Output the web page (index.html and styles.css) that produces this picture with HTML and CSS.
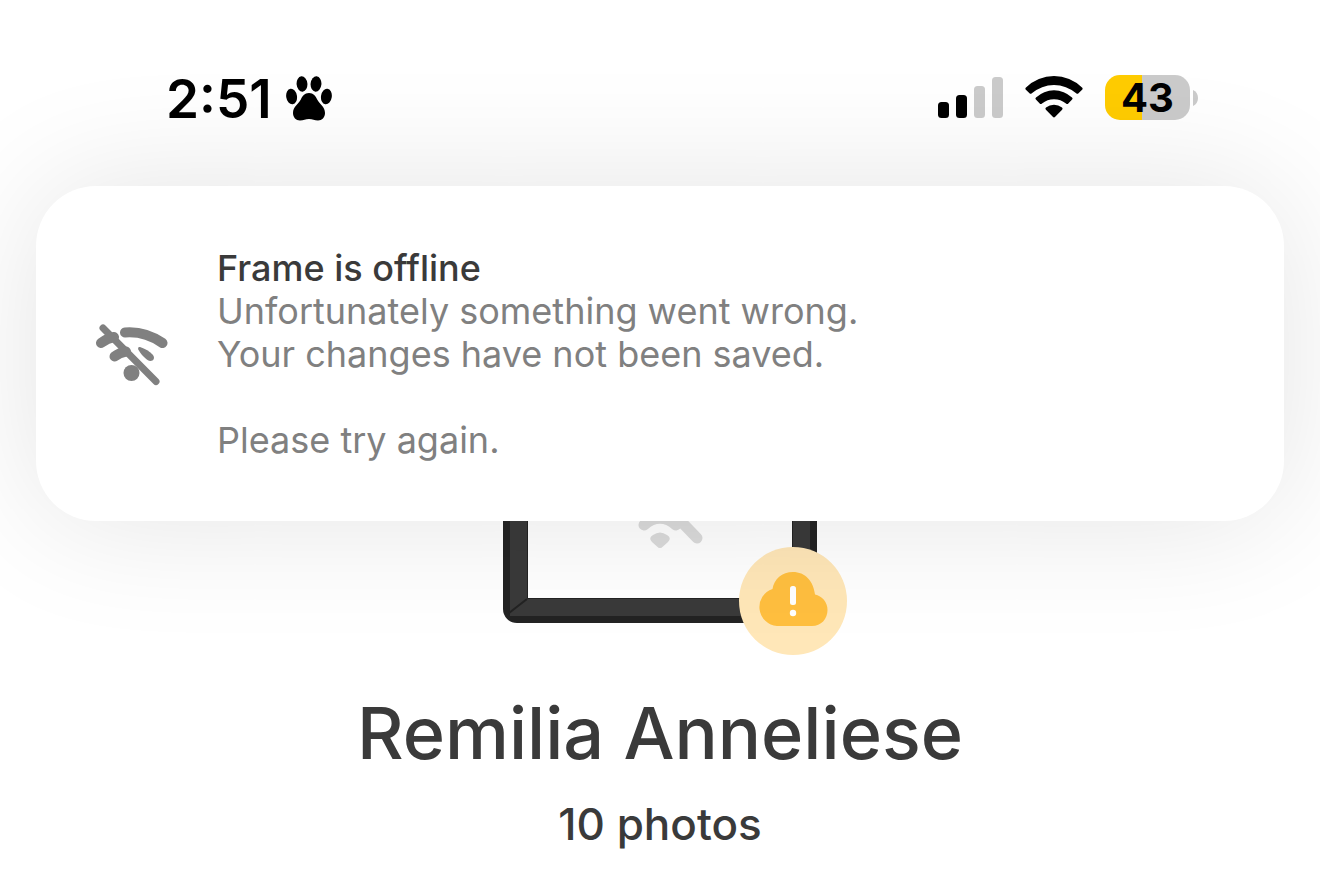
FILE: index.html
```
<!DOCTYPE html>
<html lang="en">
<head>
  <meta charset="UTF-8">
  <title>Remilia Anneliese</title>
  <meta name="viewport" content="width=device-width, initial-scale=1">
  <link rel="stylesheet" href="styles.css">
</head>
<body>

  <header class="status-bar">
    <div class="status-group status-left">
      <time class="clock">2:51</time>
      <svg class="paw" viewBox="0 0 46 46" aria-hidden="true">
        <ellipse cx="16" cy="8" rx="5.400" ry="7.700" transform="rotate(-5 16 8)"/>
        <ellipse cx="30" cy="8" rx="5.400" ry="7.700" transform="rotate(5 30 8)"/>
        <ellipse cx="5.600" cy="20.500" rx="5.400" ry="7.800" transform="rotate(-8 5.600 20.500)"/>
        <ellipse cx="40.400" cy="20.500" rx="5.400" ry="7.800" transform="rotate(8 40.400 20.500)"/>
        <path d="M23 17C27.500 17 29.600 20 31.200 23.500C33.200 28 39 30.500 39 37C39 41.500 36 44.500 32 44.500C28.500 44.500 26.500 43 23 43S17.500 44.500 14 44.500C10 44.500 7 41.500 7 37C7 30.500 12.800 28 14.800 23.500C16.400 20 18.500 17 23 17Z"/>
      </svg>
    </div>
    <div class="status-group status-right">
      <svg class="signal" viewBox="0 0 65 42" aria-hidden="true">
        <rect x="0" y="25" width="11" height="16" rx="3.500"/>
        <rect x="18" y="18" width="11" height="23" rx="3.500"/>
        <rect class="dim" x="36" y="9" width="11" height="32" rx="3.500"/>
        <rect class="dim" x="54" y="0" width="11" height="41" rx="3.500"/>
      </svg>
      <svg class="wifi" viewBox="0 0 58 43" aria-hidden="true">
        <path d="M1 11.500A40 40 0 0 1 57 11.500Q58.200 12.600 57.100 13.700L53.500 17.300Q52.400 18.300 51.200 17.300A34 34 0 0 0 6.800 17.300Q5.600 18.300 4.500 17.300L0.900 13.700Q-0.200 12.600 1 11.500Z"/>
        <path d="M11 21.400A26.500 26.500 0 0 1 47 21.400Q48.200 22.500 47.100 23.600L43.300 27.400Q42.200 28.400 41 27.400A19 19 0 0 0 17 27.400Q15.800 28.400 14.700 27.400L10.900 23.600Q9.800 22.500 11 21.400Z"/>
        <path d="M21 31.500A13 13 0 0 1 37 31.500Q38.200 32.600 37.100 33.700L30.200 40.800Q29 42 27.800 40.800L20.900 33.700Q19.800 32.600 21 31.500Z"/>
      </svg>
      <div class="battery">
        <span class="battery-level">43</span>
        <svg class="battery-cap" viewBox="0 0 5 16" aria-hidden="true">
          <path d="M0 0C3 1.500 5 4 5 8S3 14.500 0 16Z"/>
        </svg>
      </div>
    </div>
  </header>

  <section class="banner" role="alert">
    <svg class="banner-icon" viewBox="0 0 72 62" aria-hidden="true">
      <path class="thick" d="M29 8.500C41 7.500 54 10.500 66.500 19"/>
      <path class="thick" d="M5 19C9 16 12 14 18 13"/>
      <path class="thick" d="M18.500 32.500C21 30.500 24 28.500 30 27.500"/>
      <path d="M44 23C49 24.500 54 27.500 57 31C60 35.500 55.500 38.500 51.500 36C48 33.500 44 29 42.300 25.500Q41.500 22.500 44 23Z"/>
      <circle cx="35.500" cy="49" r="8"/>
      <path class="slash" d="M7 4L60 57.500"/>
    </svg>
    <div class="banner-text">
      <h2>Frame is offline</h2>
      <p>Unfortunately something went wrong.<br>Your changes have not been saved.</p>
      <p>Please try again.</p>
    </div>
  </section>

  <main class="device">
    <div class="frame">
      <svg class="frame-art" viewBox="0 0 314 314" aria-hidden="true">
        <path fill="#232323" fill-rule="evenodd" d="M14 0H300A14 14 0 0 1 314 14V300A14 14 0 0 1 300 314H14A14 14 0 0 1 0 300V14A14 14 0 0 1 14 0ZM25 25V289H289V25Z"/>
        <path fill="#3a3a3a" fill-rule="evenodd" d="M7 7H307V307H7ZM25 25V289H289V25Z"/>
        <path class="edge" d="M24.500 24.500H289.500V289.500H24.500Z"/>
        <path class="edge miter" d="M6 304L24 290M308 304L290 290M6 6L24 24M308 6L290 24"/>
        <g class="offline">
          <path d="M141 216Q157 202 173 216"/>
          <path d="M142 175L194 229"/>
        </g>
        <path fill="#dbdbdb" d="M150 226Q157 221 164 226Q169 229 165 233L160 237.500Q157 240.500 154 237.500L149 233Q145 229 150 226Z"/>
      </svg>
      <svg class="badge" viewBox="0 0 108 108" role="img" aria-label="Sync problem">
        <circle cx="54" cy="54" r="54" fill="#ffe7b8"/>
        <path fill="#ffbf3f" d="M38 79A19 19 0 0 1 33.500 42C35 32 43 25 54 25C66 25 74.500 34 76 47.500C83 49 88.500 55 88.500 63C88.500 72 82 79 73 79Z"/>
        <rect x="51" y="39" width="6" height="19" rx="2.500" fill="#fff"/>
        <circle cx="54" cy="66" r="3.200" fill="#fff"/>
      </svg>
    </div>
    <h1>Remilia Anneliese</h1>
    <p class="count">10 photos</p>
  </main>

</body>
</html>
```

FILE: styles.css
```
* {
  box-sizing: border-box;
}
body {
  margin: 0;
  position: relative;
  overflow-x: hidden;
  background: #fff;
  color: #3a3a3a;
  font-family: Inter, "Liberation Sans", sans-serif;
}
h1, h2, p {
  margin: 0;
}
.status-bar {
  display: flex;
  align-items: center;
  justify-content: space-between;
  padding: 64px 122px 0 166px;
  color: #000;
}
.status-group {
  display: flex;
  align-items: center;
}
.status-left {
  gap: 14px;
  padding-top: 3px;
}
.status-right {
  gap: 22px;
}
.clock {
  font-size: 53px;
  font-weight: 600;
  line-height: 64px;
}
.paw {
  width: 46px;
  height: 46px;
}
.signal {
  width: 65px;
  height: 42px;
}
.signal .dim {
  fill: #cbcbcb;
}
.wifi {
  width: 58px;
  height: 43px;
}
.battery {
  display: flex;
  align-items: center;
  gap: 3px;
}
.battery-level {
  width: 85px;
  border-radius: 15px;
  background: linear-gradient(to right, #fc0 43%, #cbcbcb 43%);
  font-size: 40px;
  font-weight: 700;
  line-height: 45px;
  text-align: center;
}
.battery-cap {
  width: 5px;
  height: 16px;
  fill: #cbcbcb;
}
/* notification sits over the page */
.banner {
  position: absolute;
  z-index: 1;
  top: 186px;
  left: 36px;
  right: 36px;
  display: flex;
  align-items: center;
  gap: 49px;
  padding: 61px 60px 59px;
  border-radius: 60px;
  background: #fff;
  box-shadow: 0 0 130px rgba(0, 0, 0, 0.11);
}
.banner-icon {
  flex: none;
  width: 72px;
  height: 62px;
  fill: #808080;
}
.banner-icon .thick,
.banner-icon .slash {
  fill: none;
  stroke: #808080;
  stroke-width: 10;
  stroke-linecap: round;
}
.banner-icon .slash {
  stroke-width: 7;
}
.banner-text {
  color: #808080;
  font-size: 36px;
  line-height: 43px;
}
.banner-text h2 {
  color: #3a3a3a;
  font-size: 36px;
  font-weight: 500;
}
.banner-text p + p {
  margin-top: 43px;
}
.device {
  display: flex;
  flex-direction: column;
  align-items: center;
  padding-top: 178px;
}
.frame {
  position: relative;
  width: 314px;
}
.frame-art {
  display: block;
  width: 100%;
}
.frame-art .edge {
  fill: none;
  stroke: #232323;
  stroke-width: 1;
}
.frame-art .miter {
  stroke-width: 2;
}
.frame-art .offline {
  fill: none;
  stroke: #dbdbdb;
  stroke-width: 11;
  stroke-linecap: round;
}
.badge {
  position: absolute;
  right: -30px;
  bottom: -32px;
  width: 108px;
}
h1 {
  margin-top: 64px;
  font-size: 72px;
  font-weight: 500;
  line-height: 92px;
}
.count {
  margin-top: 17px;
  font-size: 44px;
  font-weight: 500;
  line-height: 56px;
}
```
